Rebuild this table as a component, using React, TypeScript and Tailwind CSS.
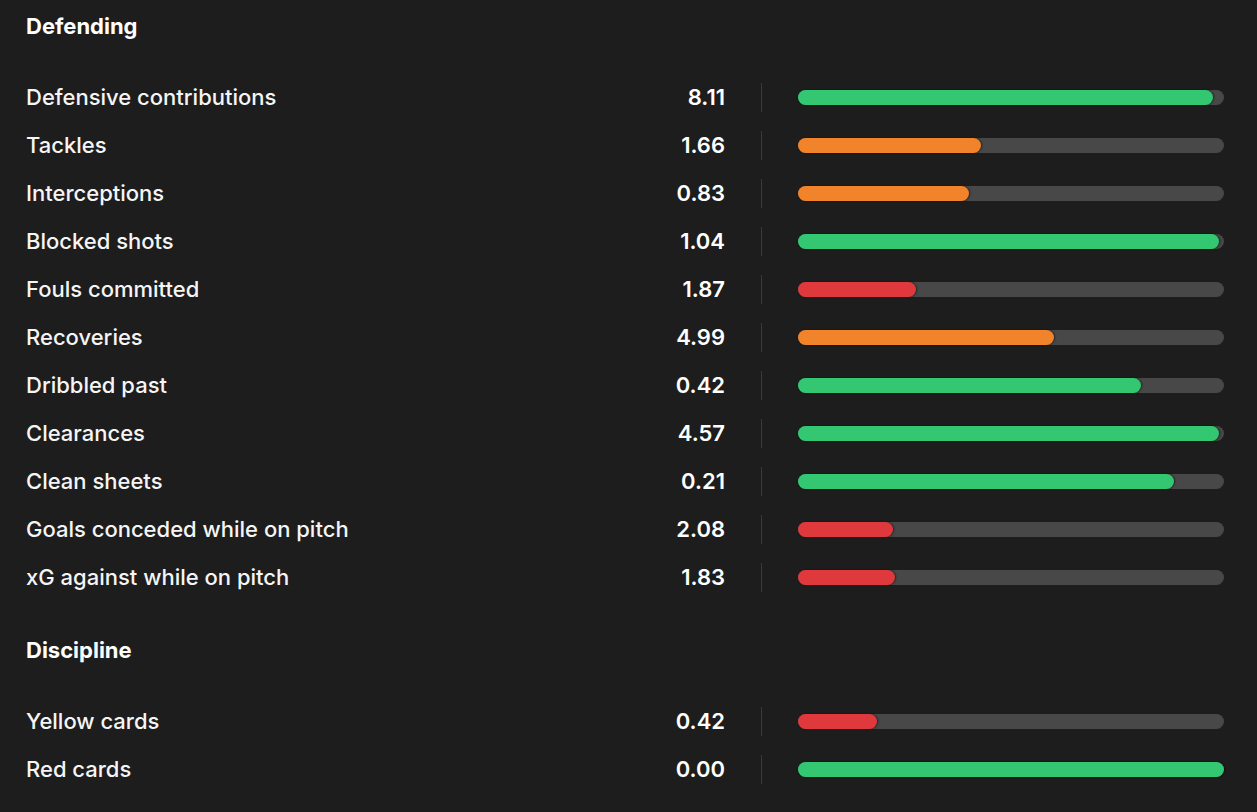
import React from 'react';

type Stat = {
  label: string;
  value: string;
  pct: number;
  color: 'green' | 'orange' | 'red';
};

const barColors = {
  green: 'bg-[#33c771]',
  orange: 'bg-[#f1832a]',
  red: 'bg-[#e0393d]',
};

const defending: Stat[] = [
  { label: 'Defensive contributions', value: '8.11', pct: 97.4, color: 'green' },
  { label: 'Tackles', value: '1.66', pct: 43, color: 'orange' },
  { label: 'Interceptions', value: '0.83', pct: 40.2, color: 'orange' },
  { label: 'Blocked shots', value: '1.04', pct: 98.8, color: 'green' },
  { label: 'Fouls committed', value: '1.87', pct: 27.8, color: 'red' },
  { label: 'Recoveries', value: '4.99', pct: 60, color: 'orange' },
  { label: 'Dribbled past', value: '0.42', pct: 80.6, color: 'green' },
  { label: 'Clearances', value: '4.57', pct: 98.8, color: 'green' },
  { label: 'Clean sheets', value: '0.21', pct: 88.3, color: 'green' },
  { label: 'Goals conceded while on pitch', value: '2.08', pct: 22.3, color: 'red' },
  { label: 'xG against while on pitch', value: '1.83', pct: 22.8, color: 'red' },
];

const discipline: Stat[] = [
  { label: 'Yellow cards', value: '0.42', pct: 18.6, color: 'red' },
  { label: 'Red cards', value: '0.00', pct: 100, color: 'green' },
];

const StatRow: React.FC<{ stat: Stat }> = ({ stat }) => (
  <div className="flex h-12 items-center">
    <span className="flex-1 pt-px text-[22px] font-medium text-[#f5f5f5]">{stat.label}</span>
    <span className="pt-px text-right text-[22px] font-semibold text-white">{stat.value}</span>
    <div className="mx-[36px] h-[29px] w-px bg-[#3a3a3a]" />
    <div className="h-[15px] w-[426px] rounded-full bg-[#484848]">
      <div
        className={`h-full rounded-full shadow-[1px_0_2px_rgba(0,0,0,0.5)] ${barColors[stat.color]}`}
        style={{ width: `${stat.pct}%` }}
      />
    </div>
  </div>
);

const Section: React.FC<{ title: string; stats: Stat[]; className?: string }> = ({
  title,
  stats,
  className = '',
}) => (
  <section className={className}>
    <h2 className="flex h-[52px] items-center pt-px text-[22px] font-bold text-white">{title}</h2>
    <div className="mt-[21px]">
      {stats.map((s) => (
        <StatRow key={s.label} stat={s} />
      ))}
    </div>
  </section>
);

export default function App() {
  return (
    <div
      className="min-h-screen w-full bg-[#1d1d1d] pl-[26px] pr-[33px] pb-4"
      style={{ fontFamily: 'Inter, "Noto Sans", sans-serif' }}
    >
      <Section title="Defending" stats={defending} />
      <Section title="Discipline" stats={discipline} className="mt-[23px]" />
    </div>
  );
}
